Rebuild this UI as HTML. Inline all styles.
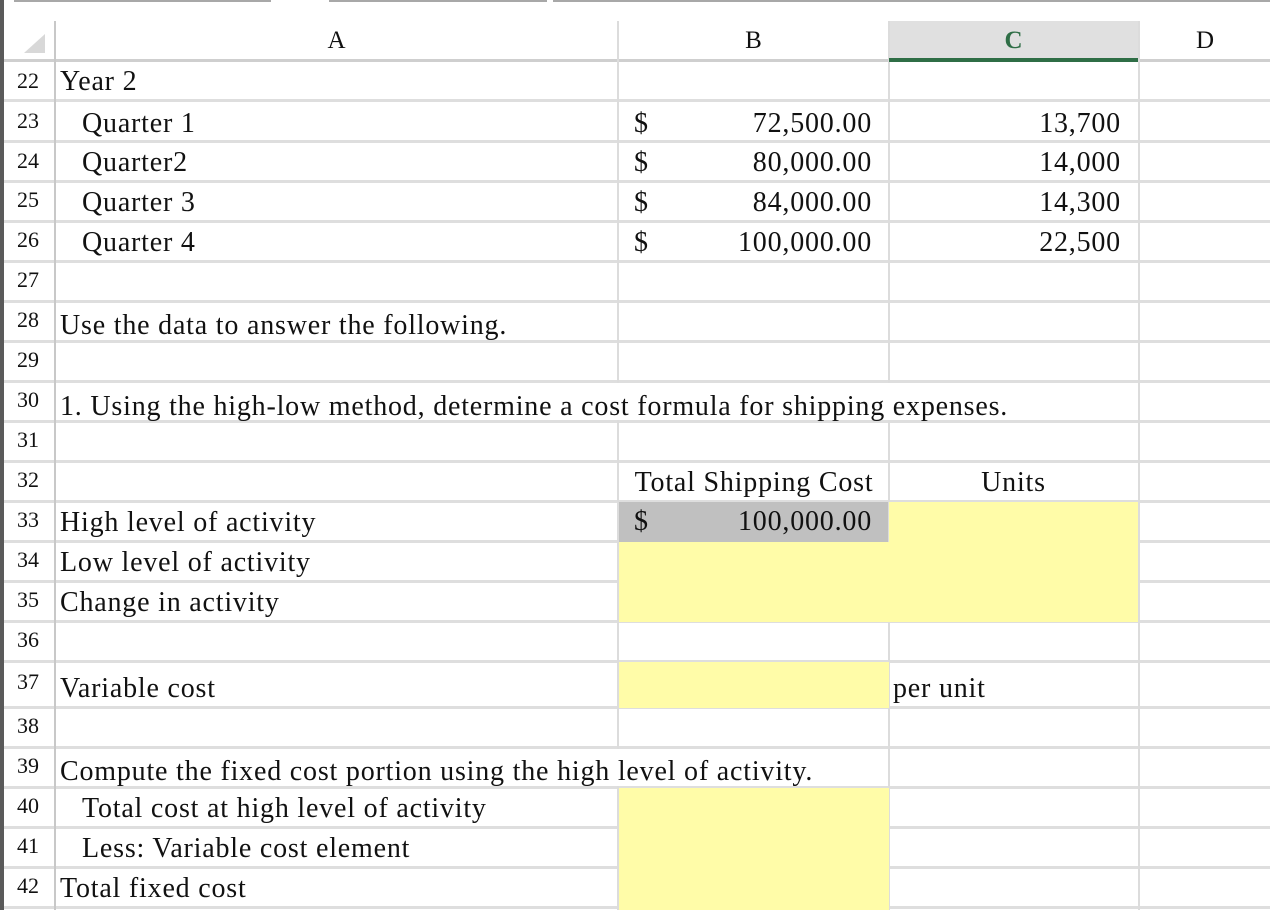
<!DOCTYPE html>
<html><head><meta charset="utf-8"><style>
*{margin:0;padding:0;box-sizing:border-box}
body{width:1270px;height:910px;background:#fff;position:relative;overflow:hidden;font-family:"Liberation Serif",serif;color:#111}
.a{position:absolute}
.h{position:absolute;left:4px;width:1266px;height:3px;background:#dedede}
.v{position:absolute;top:21px;width:2px;height:889px;background:#dcdcdc}
.t{position:absolute;font-size:28px;letter-spacing:0.8px;white-space:nowrap;line-height:36px}
.n{position:absolute;left:17px;font-size:22px;line-height:30px}
.r{text-align:right}
.c{position:absolute;width:2px;background:#fff}
.hd{position:absolute;top:21px;height:40px;line-height:40px;font-size:25px;text-align:center}
</style></head><body>
<div class="a" style="left:0;top:0;width:4px;height:910px;background:#5a5a5a"></div>
<div class="a" style="left:14px;top:0;width:257px;height:2px;background:#a8a8a8"></div>
<div class="a" style="left:329px;top:0;width:218px;height:2px;background:#a8a8a8"></div>
<div class="a" style="left:553px;top:0;width:717px;height:2px;background:#a8a8a8"></div>
<div class="a" style="left:889px;top:21px;width:249px;height:40px;background:#e0e0e0"></div>
<svg class="a" style="left:24px;top:34px" width="22" height="20"><polygon points="21,0 21,19 0,19" fill="#d8d8d8"/></svg>
<div class="h" style="top:59px;height:3px;background:#cfcfcf"></div>
<div class="h" style="top:99px"></div><div class="h" style="top:140px"></div>
<div class="h" style="top:180px"></div><div class="h" style="top:220px"></div>
<div class="h" style="top:260px"></div><div class="h" style="top:300px"></div>
<div class="h" style="top:340px"></div><div class="h" style="top:380px"></div>
<div class="h" style="top:420px"></div><div class="h" style="top:460px"></div>
<div class="h" style="top:500px"></div><div class="h" style="top:540px"></div>
<div class="h" style="top:580px"></div><div class="h" style="top:620px"></div>
<div class="h" style="top:660px"></div><div class="h" style="top:706px"></div>
<div class="h" style="top:746px"></div><div class="h" style="top:786px"></div>
<div class="h" style="top:826px"></div><div class="h" style="top:866px"></div>
<div class="h" style="top:906px"></div>
<div class="v" style="left:54px;background:#c8c8c8"></div>
<div class="v" style="left:617px"></div>
<div class="v" style="left:888px"></div>
<div class="v" style="left:1138px"></div>
<div class="c" style="left:617px;top:383px;height:37px"></div>
<div class="c" style="left:888px;top:383px;height:37px"></div>
<div class="c" style="left:617px;top:749px;height:37px"></div>
<div class="a" style="left:889px;top:58px;width:249px;height:4px;background:#2f6e46"></div>
<div class="a" style="left:619px;top:502px;width:269px;height:40px;background:#c0c0c0"></div>
<div class="a" style="left:889px;top:502px;width:249px;height:120px;background:#fffca8"></div>
<div class="a" style="left:619px;top:542px;width:270px;height:80px;background:#fffca8"></div>
<div class="a" style="left:619px;top:662px;width:270px;height:46px;background:#fffca8"></div>
<div class="a" style="left:619px;top:788px;width:270px;height:122px;background:#fffca8"></div>
<div class="hd" style="left:56px;width:561px">A</div>
<div class="hd" style="left:619px;width:269px">B</div>
<div class="hd" style="left:889px;width:249px;color:#2f6e46;font-weight:bold">C</div>
<div class="hd" style="left:1140px;width:130px">D</div>
<div class="n" style="top:66px">22</div><div class="n" style="top:106px">23</div>
<div class="n" style="top:146px">24</div><div class="n" style="top:185px">25</div>
<div class="n" style="top:225px">26</div><div class="n" style="top:265px">27</div>
<div class="n" style="top:305px">28</div><div class="n" style="top:345px">29</div>
<div class="n" style="top:385px">30</div><div class="n" style="top:425px">31</div>
<div class="n" style="top:465px">32</div><div class="n" style="top:505px">33</div>
<div class="n" style="top:545px">34</div><div class="n" style="top:585px">35</div>
<div class="n" style="top:625px">36</div><div class="n" style="top:667px">37</div>
<div class="n" style="top:711px">38</div><div class="n" style="top:751px">39</div>
<div class="n" style="top:791px">40</div><div class="n" style="top:831px">41</div>
<div class="n" style="top:871px">42</div>
<div class="t" style="left:60px;top:64px">Year 2</div>
<div class="t" style="left:82px;top:106px">Quarter 1</div>
<div class="t" style="left:82px;top:145px">Quarter2</div>
<div class="t" style="left:82px;top:185px">Quarter 3</div>
<div class="t" style="left:82px;top:225px">Quarter 4</div>
<div class="t" style="left:60px;top:308px">Use the data to answer the following.</div>
<div class="t" style="left:60px;top:389px">1. Using the high-low method, determine a cost formula for shipping expenses.</div>
<div class="t" style="left:60px;top:505px">High level of activity</div>
<div class="t" style="left:60px;top:545px">Low level of activity</div>
<div class="t" style="left:60px;top:585px">Change in activity</div>
<div class="t" style="left:60px;top:671px">Variable cost</div>
<div class="t" style="left:60px;top:754px">Compute the fixed cost portion using the high level of activity.</div>
<div class="t" style="left:82px;top:791px">Total cost at high level of activity</div>
<div class="t" style="left:82px;top:831px">Less: Variable cost element</div>
<div class="t" style="left:60px;top:871px">Total fixed cost</div>
<div class="t" style="left:634px;top:106px">$</div><div class="t r" style="right:398px;top:106px">72,500.00</div><div class="t r" style="right:149px;top:106px">13,700</div>
<div class="t" style="left:634px;top:145px">$</div><div class="t r" style="right:398px;top:145px">80,000.00</div><div class="t r" style="right:149px;top:145px">14,000</div>
<div class="t" style="left:634px;top:185px">$</div><div class="t r" style="right:398px;top:185px">84,000.00</div><div class="t r" style="right:149px;top:185px">14,300</div>
<div class="t" style="left:634px;top:225px">$</div><div class="t r" style="right:398px;top:225px">100,000.00</div><div class="t r" style="right:149px;top:225px">22,500</div>
<div class="t" style="left:619px;width:270px;text-align:center;top:465px">Total Shipping Cost</div>
<div class="t" style="left:889px;width:249px;text-align:center;top:465px">Units</div>
<div class="t" style="left:634px;top:504px">$</div><div class="t r" style="right:398px;top:504px">100,000.00</div>
<div class="t" style="left:893px;top:671px">per unit</div>
</body></html>
